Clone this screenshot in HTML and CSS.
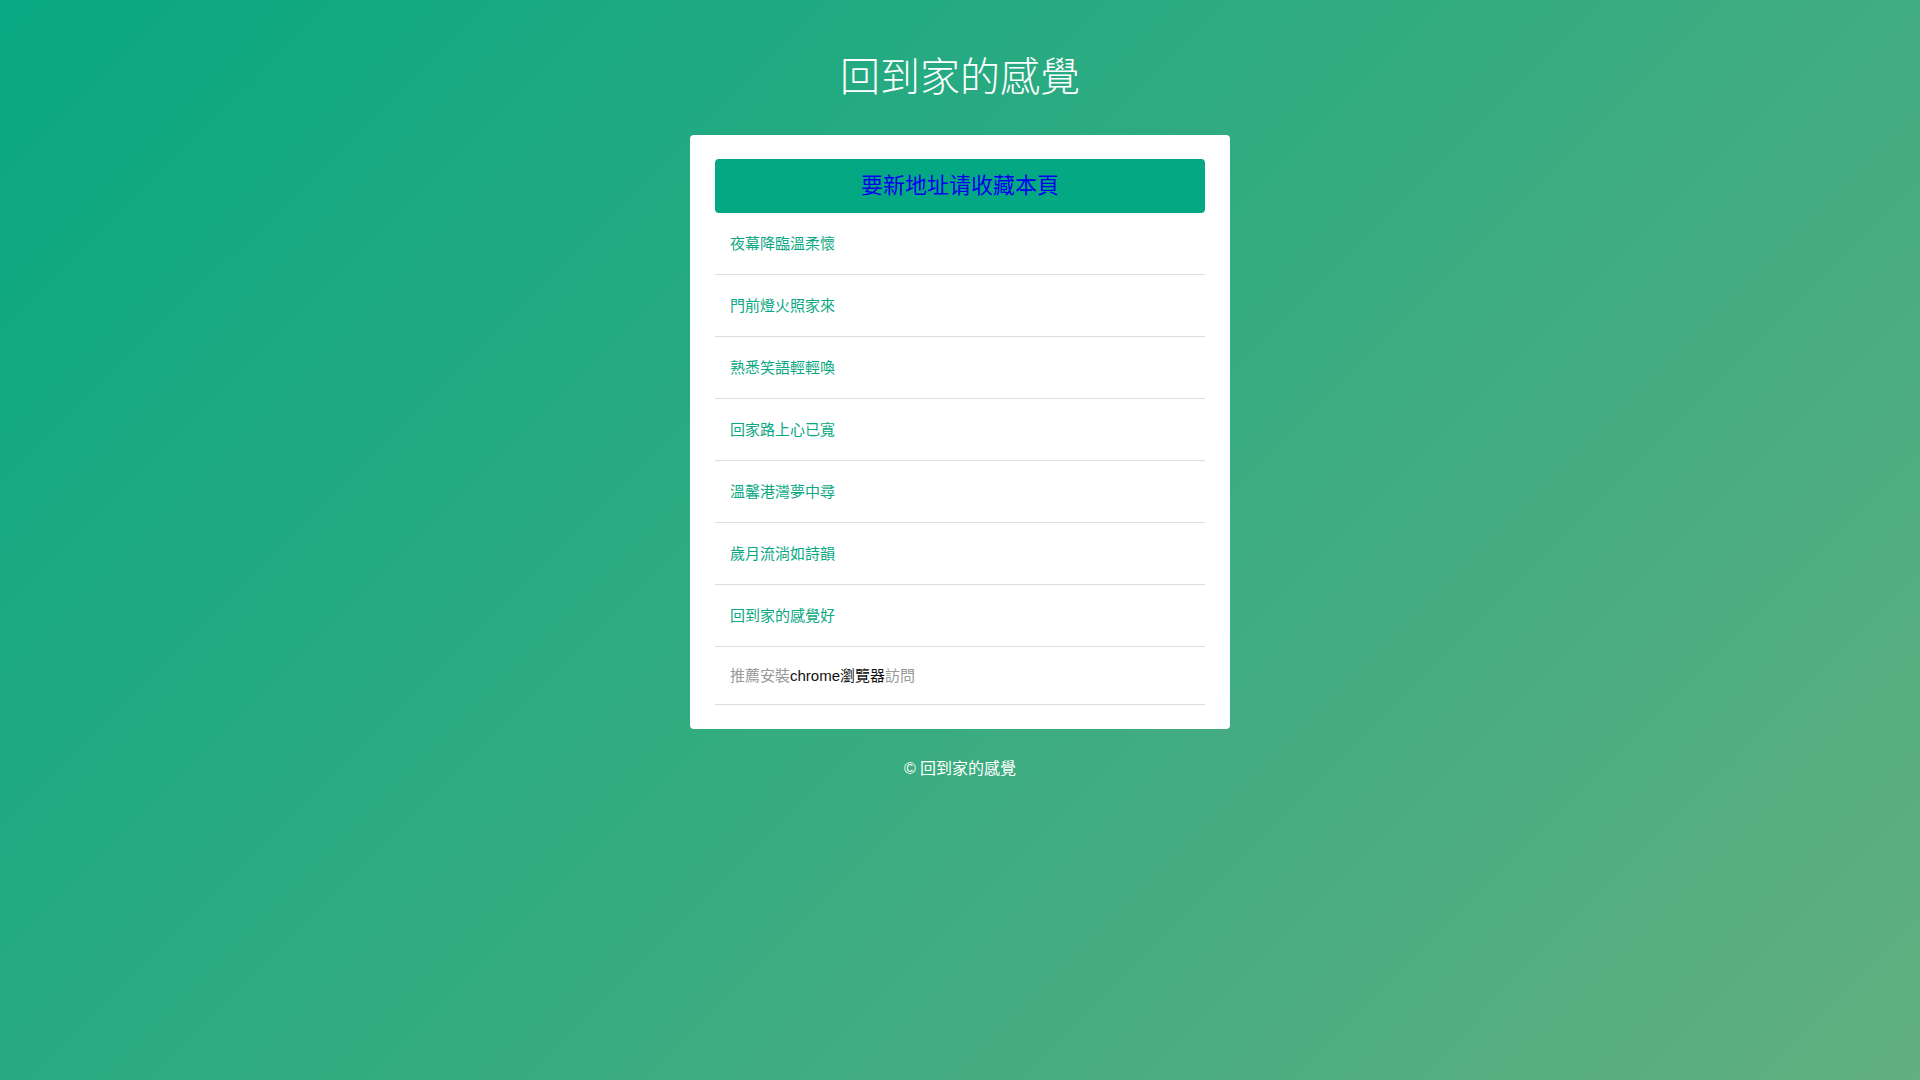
FILE: index.html
```html
<!DOCTYPE html>
<html lang="zh-TW">
<head>
    <meta charset="UTF-8">
    <meta name="viewport" content="width=device-width, initial-scale=1.0">
    <title>回到家的感覺</title>
    <link rel="stylesheet" href="styles.css">
</head>
<body>
    <h1 class="title">回到家的感覺</h1>

    <div class="card">
        <a href="#" class="notice">要新地址请收藏本頁</a>

        <ul class="links">
            <li><a href="#">夜幕降臨溫柔懷</a></li>
            <li><a href="#">門前燈火照家來</a></li>
            <li><a href="#">熟悉笑語輕輕喚</a></li>
            <li><a href="#">回家路上心已寬</a></li>
            <li><a href="#">溫馨港灣夢中尋</a></li>
            <li><a href="#">歲月流淌如詩韻</a></li>
            <li><a href="#">回到家的感覺好</a></li>
            <li class="tip">推薦安裝<span>chrome瀏覽器</span>訪問</li>
        </ul>
    </div>

    <div class="footer">© 回到家的感覺</div>
</body>
</html>
```

FILE: styles.css
```css
* {
    margin: 0;
    padding: 0;
    box-sizing: border-box;
}

body {
    font-family: "Liberation Sans", "Noto Sans CJK TC", sans-serif;
    background: linear-gradient(135deg, #08a882 0%, #62af80 100%);
    min-height: 100vh;
    color: #333;
}

.title {
    margin: 53px 0 34px;
    font-size: 40px;
    line-height: 48px;
    font-weight: 300;
    color: #fff;
    text-align: center;
}

.card {
    width: 540px;
    margin: 0 auto;
    background: #fff;
    border-radius: 4px;
    padding: 24px 25px 24px;
}

.notice {
    display: block;
    height: 54px;
    line-height: 54px;
    background: #04a984;
    border-radius: 4px;
    color: #0000ee;
    font-size: 22px;
    text-align: center;
    text-decoration: none;
}

.links {
    list-style: none;
}

.links li {
    border-bottom: 1px solid #dddddd;
    padding: 20px 15px;
    font-size: 15px;
    line-height: 21px;
}

.links a {
    color: #0aa882;
    text-decoration: none;
}

.links .tip {
    padding: 18px 15px;
    color: #999;
}

.tip span {
    color: #111;
}

.footer {
    margin-top: 29px;
    font-size: 16px;
    line-height: 22px;
    color: #fff;
    text-align: center;
}
```
